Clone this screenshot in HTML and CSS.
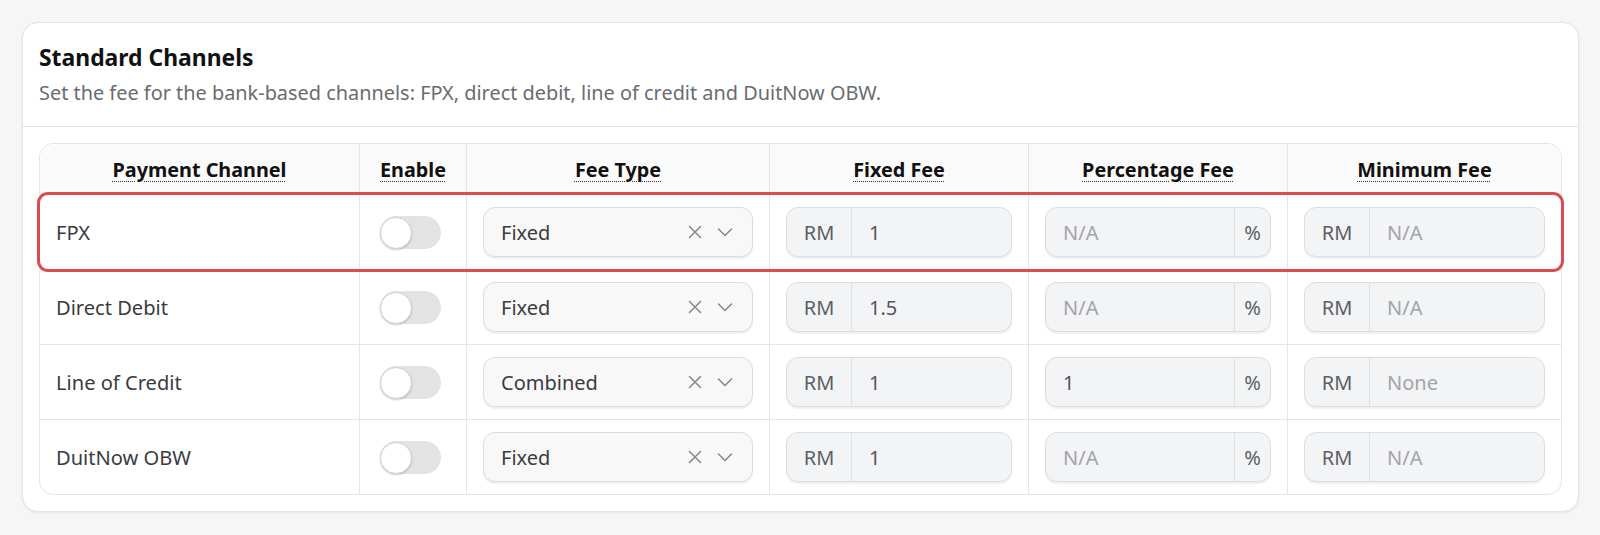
FILE: index.html
```html
<!DOCTYPE html>
<html lang="en">
<head>
  <meta charset="UTF-8">
  <meta name="viewport" content="width=device-width, initial-scale=1.0">
  <title>Standard Channels - Fee Settings</title>
  <link rel="stylesheet" href="styles.css">
</head>
<body>
  <section class="card">
    <header class="card-head">
      <h2 class="card-title">Standard Channels</h2>
      <p class="card-desc">Set the fee for the bank-based channels: FPX, direct debit, line of credit and DuitNow OBW.</p>
    </header>

    <div class="card-body">
      <div class="fee-table">
        <div class="fee-row fee-head">
          <div class="cell"><span class="hint">Payment Channel</span></div>
          <div class="cell"><span class="hint">Enable</span></div>
          <div class="cell"><span class="hint">Fee Type</span></div>
          <div class="cell"><span class="hint">Fixed Fee</span></div>
          <div class="cell"><span class="hint">Percentage Fee</span></div>
          <div class="cell"><span class="hint">Minimum Fee</span></div>
        </div>

        <!-- FPX -->
        <div class="fee-row is-flagged">
          <div class="cell name">FPX</div>
          <div class="cell center"><span class="switch"><span class="knob"></span></span></div>
          <div class="cell">
            <div class="select">
              <span class="select-value">Fixed</span>
              <svg class="ico" viewBox="0 0 20 20"><path d="M4.5 4.5l11 11M15.5 4.5l-11 11"/></svg>
              <svg class="ico" viewBox="0 0 20 20"><path d="M3.5 7l6.5 6.5L16.5 7"/></svg>
            </div>
          </div>
          <div class="cell">
            <div class="field"><span class="addon">RM</span><span class="field-value">1</span></div>
          </div>
          <div class="cell">
            <div class="field"><span class="field-value muted">N/A</span><span class="addon addon-end">%</span></div>
          </div>
          <div class="cell">
            <div class="field"><span class="addon">RM</span><span class="field-value muted">N/A</span></div>
          </div>
        </div>

        <!-- Direct Debit -->
        <div class="fee-row">
          <div class="cell name">Direct Debit</div>
          <div class="cell center"><span class="switch"><span class="knob"></span></span></div>
          <div class="cell">
            <div class="select">
              <span class="select-value">Fixed</span>
              <svg class="ico" viewBox="0 0 20 20"><path d="M4.5 4.5l11 11M15.5 4.5l-11 11"/></svg>
              <svg class="ico" viewBox="0 0 20 20"><path d="M3.5 7l6.5 6.5L16.5 7"/></svg>
            </div>
          </div>
          <div class="cell">
            <div class="field"><span class="addon">RM</span><span class="field-value">1.5</span></div>
          </div>
          <div class="cell">
            <div class="field"><span class="field-value muted">N/A</span><span class="addon addon-end">%</span></div>
          </div>
          <div class="cell">
            <div class="field"><span class="addon">RM</span><span class="field-value muted">N/A</span></div>
          </div>
        </div>

        <!-- Line of Credit -->
        <div class="fee-row">
          <div class="cell name">Line of Credit</div>
          <div class="cell center"><span class="switch"><span class="knob"></span></span></div>
          <div class="cell">
            <div class="select">
              <span class="select-value">Combined</span>
              <svg class="ico" viewBox="0 0 20 20"><path d="M4.5 4.5l11 11M15.5 4.5l-11 11"/></svg>
              <svg class="ico" viewBox="0 0 20 20"><path d="M3.5 7l6.5 6.5L16.5 7"/></svg>
            </div>
          </div>
          <div class="cell">
            <div class="field"><span class="addon">RM</span><span class="field-value">1</span></div>
          </div>
          <div class="cell">
            <div class="field"><span class="field-value">1</span><span class="addon addon-end">%</span></div>
          </div>
          <div class="cell">
            <div class="field"><span class="addon">RM</span><span class="field-value muted">None</span></div>
          </div>
        </div>

        <!-- DuitNow OBW -->
        <div class="fee-row">
          <div class="cell name">DuitNow OBW</div>
          <div class="cell center"><span class="switch"><span class="knob"></span></span></div>
          <div class="cell">
            <div class="select">
              <span class="select-value">Fixed</span>
              <svg class="ico" viewBox="0 0 20 20"><path d="M4.5 4.5l11 11M15.5 4.5l-11 11"/></svg>
              <svg class="ico" viewBox="0 0 20 20"><path d="M3.5 7l6.5 6.5L16.5 7"/></svg>
            </div>
          </div>
          <div class="cell">
            <div class="field"><span class="addon">RM</span><span class="field-value">1</span></div>
          </div>
          <div class="cell">
            <div class="field"><span class="field-value muted">N/A</span><span class="addon addon-end">%</span></div>
          </div>
          <div class="cell">
            <div class="field"><span class="addon">RM</span><span class="field-value muted">N/A</span></div>
          </div>
        </div>
      </div>
    </div>
  </section>
</body>
</html>
```

FILE: styles.css
```css
body {
  margin: 0;
  padding: 22px 21px 22px 22px;
  font-family: 'Noto Sans', 'Open Sans', sans-serif;
  background: #f6f6f6;
  color: #3b3b3f;
}

.card {
  background: #fff;
  border: 1px solid #e4e4e4;
  border-radius: 16px;
  box-shadow: 0 1px 3px rgba(0,0,0,0.07);
}

.card-head {
  padding: 19px 16px 18px;
  border-bottom: 1px solid #e4e4e4;
}

.card-title {
  margin: 0 0 4px;
  font-size: 22.9px;
  line-height: 32px;
  font-weight: 700;
  color: #111;
}

.card-desc {
  margin: 0;
  font-size: 19.9px;
  line-height: 30px;
  color: #6b6b70;
}

.card-body {
  padding: 16px;
}

.fee-table {
  border: 1px solid #e6e6e6;
  border-radius: 14px;
}

.fee-row {
  display: grid;
  grid-template-columns: 319px 107px 303px 259px 259px 1fr;
  height: 75px;
  border-top: 1px solid #e6e6e6;
  box-sizing: border-box;
}

.fee-head {
  height: 50px;
  border-top: none;
  background: #fafafa;
  border-radius: 14px 14px 0 0;
}

.cell {
  display: flex;
  align-items: center;
  padding: 0 16px;
  border-left: 1px solid #e6e6e6;
  min-width: 0;
  white-space: nowrap;
}

.cell:first-child {
  border-left: none;
}

.fee-head .cell {
  justify-content: center;
  font-size: 19.8px;
  font-weight: 700;
  color: #111;
}

.hint {
  text-decoration: underline dotted #333;
  text-decoration-thickness: 1px;
  text-underline-offset: 4px;
}

.name {
  font-size: 20.1px;
}

.center {
  justify-content: center;
}

/* annotation around the first channel */
.is-flagged {
  position: relative;
}

.is-flagged::after {
  content: '';
  position: absolute;
  top: -3px;
  left: -3px;
  right: -3px;
  bottom: -3px;
  border: 3px solid #dc4a52;
  border-radius: 11px;
  pointer-events: none;
}

.switch {
  position: relative;
  width: 61px;
  height: 33px;
  border-radius: 17px;
  background: #e3e3e3;
  margin-left: -6px;
}

.knob {
  position: absolute;
  top: 1px;
  left: 0;
  width: 30px;
  height: 30px;
  border-radius: 50%;
  background: #fff;
  border: 1px solid #d4d4d4;
  box-shadow: 0 1px 2px rgba(0,0,0,0.2);
}

.select {
  flex: 1;
  display: flex;
  align-items: center;
  gap: 10px;
  height: 50px;
  box-sizing: border-box;
  padding: 0 17px 0 17px;
  background: #f8f8f8;
  border: 1px solid #dcdcdc;
  border-radius: 12px;
  box-shadow: 0 2px 1px rgba(0,0,0,0.06);
  font-size: 20px;
  color: #3b3b3f;
}

.select-value {
  flex: 1;
}

.ico {
  width: 20px;
  height: 20px;
  fill: none;
  stroke: #8a8a8a;
  stroke-width: 1.6;
  stroke-linecap: round;
  stroke-linejoin: round;
}

.field {
  flex: 1;
  display: flex;
  height: 50px;
  box-sizing: border-box;
  background: #f2f4f6;
  border: 1px solid #dcdddf;
  border-radius: 12px;
  box-shadow: 0 2px 1px rgba(0,0,0,0.06);
  font-size: 20px;
  overflow: hidden;
}

.addon {
  display: flex;
  align-items: center;
  justify-content: center;
  width: 64px;
  color: #5f5f63;
  border-right: 1px solid #e0e1e3;
}

.addon-end {
  width: 35px;
  border-right: none;
  border-left: 1px solid #e0e1e3;
}

.field-value {
  flex: 1;
  display: flex;
  align-items: center;
  padding: 0 17px;
  color: #55555a;
}

.muted {
  color: #a3a3a7;
}
```
